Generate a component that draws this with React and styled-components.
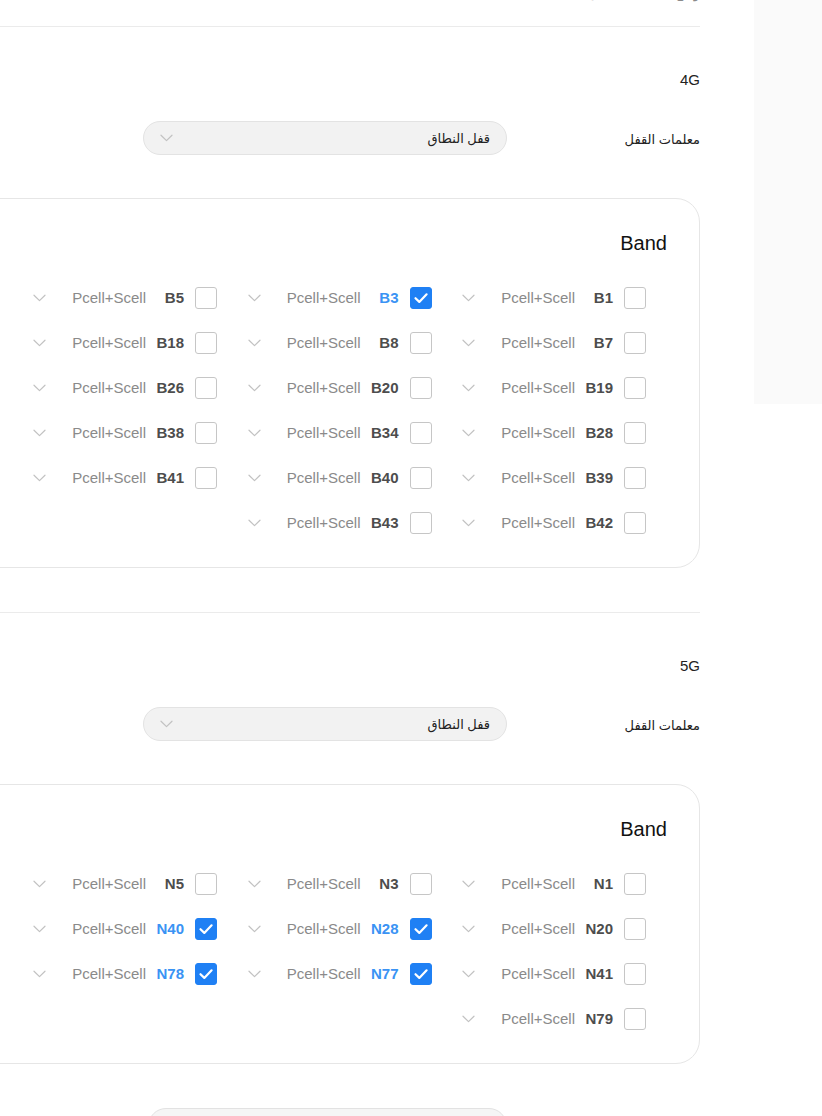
import React from 'react';
import styled, { createGlobalStyle } from 'styled-components';

const lte = [
  { name: 'B1' }, { name: 'B3', on: true }, { name: 'B5' },
  { name: 'B7' }, { name: 'B8' }, { name: 'B18' },
  { name: 'B19' }, { name: 'B20' }, { name: 'B26' },
  { name: 'B28' }, { name: 'B34' }, { name: 'B38' },
  { name: 'B39' }, { name: 'B40' }, { name: 'B41' },
  { name: 'B42' }, { name: 'B43' }
];

const nr = [
  { name: 'N1' }, { name: 'N3' }, { name: 'N5' },
  { name: 'N20' }, { name: 'N28', on: true }, { name: 'N40', on: true },
  { name: 'N41' }, { name: 'N77', on: true }, { name: 'N78', on: true },
  { name: 'N79' }
];

const Chevron = ({ size = 13 }) => (
  <svg width={size} height={Math.round(size * 0.6)} viewBox="0 0 13 8" fill="none">
    <path d="M1 1.2l5.5 5.4L12 1.2" stroke="#c2c2c2" strokeWidth="1.2" strokeLinecap="round" strokeLinejoin="round" />
  </svg>
);

const Tick = () => (
  <svg width="16" height="16" viewBox="0 0 16 16" fill="none">
    <path d="M2.5 8.2l3.8 3.7L13.6 4.3" stroke="#fff" strokeWidth="2.2" strokeLinecap="round" strokeLinejoin="round" />
  </svg>
);

function BandCell({ band }) {
  return (
    <Cell>
      <Box $on={band.on}>{band.on && <Tick />}</Box>
      <BandName $on={band.on}>{band.name}</BandName>
      <CellSelect>
        <span>Pcell+Scell</span>
        <Chevron />
      </CellSelect>
    </Cell>
  );
}

function NetSection({ title, bands }) {
  return (
    <Section>
      <NetTitle>{title}</NetTitle>
      <FormRow>
        <FieldLabel>معلمات القفل</FieldLabel>
        <Select>
          <span>قفل النطاق</span>
          <Chevron />
        </Select>
      </FormRow>
      <Card>
        <CardTitle>Band</CardTitle>
        <Grid>
          {bands.map(b => <BandCell key={b.name} band={b} />)}
        </Grid>
      </Card>
    </Section>
  );
}

export default function App() {
  return (
    <>
      <GlobalStyle />
      <Page>
        <Main>
          <TopRow>
            <TopText>وضع الشبكة المفضل</TopText>
          </TopRow>
          <NetSection title="4G" bands={lte} />
          <NetSection title="5G" bands={nr} />
          <Footer>
            <SaveButton />
          </Footer>
        </Main>
        <Side />
      </Page>
    </>
  );
}

const GlobalStyle = createGlobalStyle`
  html, body {
    margin: 0;
    background: #fff;
    overflow: hidden;
  }
  body {
    font-family: "Liberation Sans", "DejaVu Sans", "Noto Sans", sans-serif;
    color: #333;
  }
`;

const Page = styled.div`
  display: flex;
  align-items: flex-start;
  direction: ltr;
  width: 822px;
`;

const Main = styled.div`
  flex-shrink: 0;
  width: 740px;
  margin-left: -40px;
  direction: rtl;
`;

const Side = styled.div`
  flex-shrink: 0;
  width: 68px;
  height: 404px;
  margin-left: 54px;
  background: #fafafa;
`;

const TopRow = styled.div`
  height: 26px;
  overflow: hidden;
`;

const TopText = styled.div`
  margin-top: -16px;
  line-height: 20px;
  font-size: 13px;
  color: #8a8a8a;
`;

const Section = styled.section`
  border-top: 1px solid #ebebeb;
  padding: 43px 0 44px;
`;

const NetTitle = styled.div`
  font-size: 15px;
  line-height: 20px;
  color: #222;
`;

const FormRow = styled.div`
  display: flex;
  align-items: center;
  margin-top: 31px;
`;

const FieldLabel = styled.div`
  width: 193px;
  padding-top: 3px;
  font-size: 13px;
  color: #222;
`;

const Select = styled.div`
  box-sizing: border-box;
  width: 364px;
  height: 34px;
  padding: 0 16px;
  display: flex;
  align-items: center;
  justify-content: space-between;
  background: #f2f2f2;
  border: 1px solid #e3e3e3;
  border-radius: 17px;
  font-size: 13px;
  color: #222;
`;

const Card = styled.div`
  margin-top: 43px;
  padding: 32px 32px 22px;
  border: 1px solid #e6e6e6;
  border-radius: 24px;
`;

const CardTitle = styled.div`
  font-size: 20px;
  line-height: 24px;
  color: #111;
`;

const Grid = styled.div`
  display: grid;
  grid-template-columns: repeat(3, 214.5px);
  margin-top: 20px;
  padding-right: 21px;
`;

const Cell = styled.div`
  display: flex;
  align-items: center;
  height: 45px;
`;

const Box = styled.div`
  box-sizing: border-box;
  width: 22px;
  height: 22px;
  display: flex;
  align-items: center;
  justify-content: center;
  border: 1px solid ${p => (p.$on ? '#1f80f4' : '#c6c6c6')};
  border-radius: 3px;
  background: ${p => (p.$on ? '#1f80f4' : '#fff')};
`;

const BandName = styled.div`
  min-width: 29px;
  margin: 0 11px 0 9px;
  direction: ltr;
  text-align: right;
  font-size: 15px;
  font-weight: bold;
  color: ${p => (p.$on ? '#3a93f4' : '#4d4d4d')};
`;

const CellSelect = styled.div`
  width: 113px;
  display: flex;
  align-items: center;
  justify-content: space-between;
  font-size: 15px;
  color: #8a8a8a;

  span {
    direction: ltr;
  }
`;

const Footer = styled.div`
  display: flex;
`;

const SaveButton = styled.div`
  width: 357px;
  height: 36px;
  margin-right: 193px;
  background: #f5f5f5;
  border: 1px solid #e2e2e2;
  border-radius: 18px;
`;
